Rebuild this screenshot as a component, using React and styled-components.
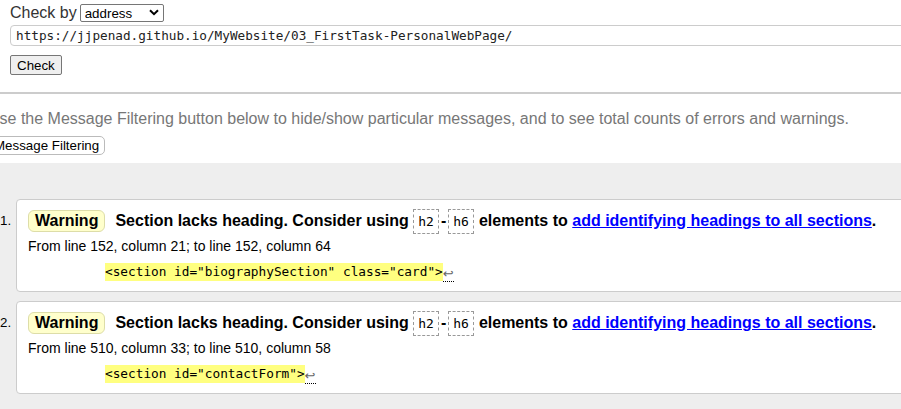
import React from 'react';
import styled, { createGlobalStyle } from 'styled-components';

const GlobalStyle = createGlobalStyle`
  html, body {
    margin: 0;
    padding: 0;
    background: #fff;
    overflow: hidden;
  }
  body {
    font-family: "Liberation Sans", Arial, sans-serif;
    color: #000;
  }
`;

const Page = styled.div`
  width: 901px;
  height: 409px;
  overflow: hidden;
`;

const Form = styled.form`
  padding: 4px 0 0 10px;
  display: flex;
  flex-direction: column;
`;

const CheckRow = styled.div`
  display: flex;
  align-items: center;
  gap: 3px;
  height: 18px;
`;

const Label = styled.span`
  font-size: 16px;
  color: #333;
`;

const SelectWrap = styled.span`
  position: relative;
  display: inline-flex;
`;

const Select = styled.select`
  appearance: none;
  width: 84px;
  height: 18px;
  box-sizing: border-box;
  border: 1px solid #767676;
  border-radius: 2px;
  background: #fff;
  padding: 0 0 0 4px;
  font-family: "Liberation Sans", Arial, sans-serif;
  font-size: 13.33px;
  color: #000;
`;

const Chevron = styled.svg`
  position: absolute;
  right: 5px;
  top: 5px;
  pointer-events: none;
`;

const UrlInput = styled.input`
  margin-top: 3px;
  width: 1000px;
  height: 21px;
  box-sizing: border-box;
  border: 1px solid #ccc;
  border-radius: 4px;
  padding: 0 5px;
  font-family: "DejaVu Sans Mono", "Liberation Mono", monospace;
  font-size: 12.7px;
  color: #222;
  background: #fff;
`;

const Button = styled.button`
  align-self: flex-start;
  height: ${p => p.$h || 20}px;
  padding: 0 ${p => p.$px || 6}px;
  border: 1px solid ${p => p.$border || '#767676'};
  border-radius: ${p => p.$radius || 2}px;
  background: ${p => p.$bg || '#efefef'};
  font-family: "Liberation Sans", Arial, sans-serif;
  font-size: 13.33px;
  color: #000;
  margin: ${p => p.$margin || 0};
`;

const Rule = styled.hr`
  margin: 17px 0 0;
  border: none;
  border-top: 2px solid #ccc;
  height: 0;
`;

const FilterBlock = styled.div`
  margin-left: -12px;
  padding-top: 15px;
  display: flex;
  flex-direction: column;
`;

const FilterText = styled.p`
  margin: 0;
  font-size: 16px;
  line-height: 20px;
  color: #777;
  white-space: nowrap;
`;

const Results = styled.div`
  margin-top: 8px;
  background: #eee;
  padding: 36px 0 20px 0;
  height: 300px;
`;

const List = styled.ol`
  list-style: none;
  margin: 0;
  padding: 0;
  width: 1000px;
  display: flex;
  flex-direction: column;
  gap: 9px;
`;

const Item = styled.li`
  display: flex;
  align-items: flex-start;
`;

const Num = styled.span`
  width: 16px;
  flex: none;
  padding-top: 14px;
  font-size: 13.33px;
  color: #000;
`;

const Card = styled.div`
  flex: 1;
  background: #fff;
  border: 1px solid #ccc;
  border-radius: 4px;
  padding: 7px 11px 10px;
  height: 93px;
  box-sizing: border-box;
`;

const Head = styled.p`
  margin: 0;
  display: flex;
  align-items: center;
  height: 28px;
  font-size: 16px;
  font-weight: bold;
  white-space: nowrap;
`;

const Badge = styled.strong`
  display: inline-flex;
  align-items: center;
  height: 22px;
  box-sizing: border-box;
  padding: 0 6px;
  background: #ffc;
  border: 1px solid #dddda8;
  border-radius: 6px;
  margin-right: 10px;
`;

const Tag = styled.code`
  display: inline-flex;
  align-items: center;
  height: 25px;
  box-sizing: border-box;
  padding: 0 4px;
  border: 1px dashed #999;
  font-family: "DejaVu Sans Mono", "Liberation Mono", monospace;
  font-size: 13px;
  font-weight: normal;
  margin: 0 ${p => p.$mr || 0}px 0 ${p => p.$ml || 0}px;
`;

const Link = styled.a`
  color: #00f;
  text-decoration: underline;
`;

const Location = styled.p`
  margin: 2px 0 0;
  font-size: 14px;
  line-height: 18px;
  white-space: nowrap;
`;

const Extract = styled.p`
  margin: 8px 0 0 77px;
  display: flex;
  align-items: center;
  height: 18px;
  white-space: pre;
  font-family: "DejaVu Sans Mono", "Liberation Mono", monospace;
  font-size: 12.75px;
`;

const Highlight = styled.mark`
  background: #ffff80;
  color: #000;
  line-height: 18px;
`;

const Newline = styled.span`
  color: #666;
  font-family: "DejaVu Sans", sans-serif;
  font-size: 13px;
  border-bottom: 1px dotted #000;
  line-height: 15px;
  margin-top: 3px;
`;

const messages = [
  {
    from: 'From line 152, column 21; to line 152, column 64',
    code: '<section id="biographySection" class="card">',
  },
  {
    from: 'From line 510, column 33; to line 510, column 58',
    code: '<section id="contactForm">',
  },
];

export default function App() {
  return (
    <Page>
      <GlobalStyle />
      <Form onSubmit={e => e.preventDefault()}>
        <CheckRow>
          <Label>Check by</Label>
          <SelectWrap>
            <Select defaultValue="address">
              <option value="address">address</option>
            </Select>
            <Chevron width="10" height="7" viewBox="0 0 10 7">
              <path d="M1 1.2 L5 5.2 L9 1.2" fill="none" stroke="#000" strokeWidth="2" />
            </Chevron>
          </SelectWrap>
        </CheckRow>
        <UrlInput readOnly value="https://jjpenad.github.io/MyWebsite/03_FirstTask-PersonalWebPage/" />
        <Button $margin="9px 0 0">Check</Button>
      </Form>
      <Rule />
      <FilterBlock>
        <FilterText>
          Use the Message Filtering button below to hide/show particular messages, and to see total counts of errors and warnings.
        </FilterText>
        <Button $h={19} $px={5} $radius={5} $border="#bbb" $bg="#fff" $margin="7px 0 0">
          Message Filtering
        </Button>
      </FilterBlock>
      <Results>
        <List>
          {messages.map((m, i) => (
            <Item key={i}>
              <Num>{i + 1}.</Num>
              <Card>
                <Head>
                  <Badge>Warning</Badge>
                  Section lacks heading. Consider using&nbsp;
                  <Tag $mr={2}>h2</Tag>-<Tag $ml={2} $mr={5}>h6</Tag>
                  elements to&nbsp;<Link href="#">add identifying headings to all sections</Link>.
                </Head>
                <Location>{m.from}</Location>
                <Extract>
                  <Highlight>{m.code}</Highlight>
                  <Newline>↩</Newline>
                </Extract>
              </Card>
            </Item>
          ))}
        </List>
      </Results>
    </Page>
  );
}
